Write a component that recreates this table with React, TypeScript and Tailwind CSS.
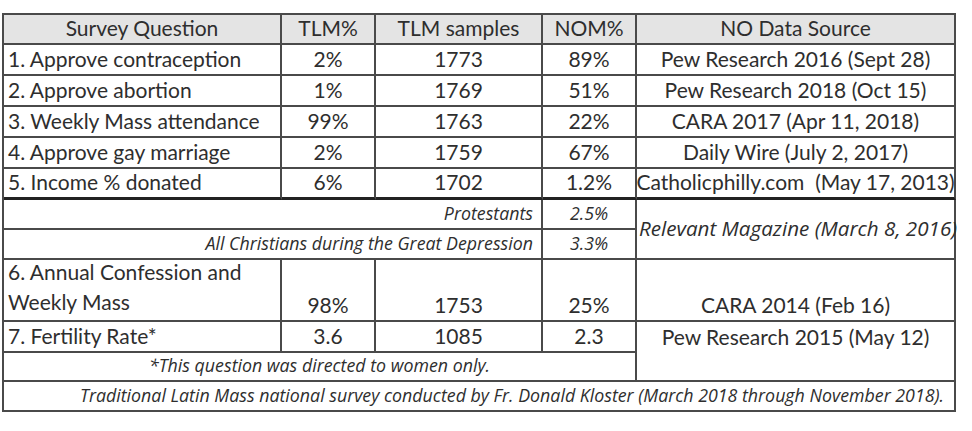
const FONT = "font-['Lato','Open_Sans',sans-serif]";
const ITAL = "italic font-['Open_Sans','Lato',sans-serif] text-[17.8px]";

type CellProps = {
  children?: React.ReactNode;
  className?: string;
};

function Cell({ children, className = "" }: CellProps) {
  return (
    <div className={`flex border-r-2 border-b-2 border-[#4a4a4a] px-[4px] pb-[3px] whitespace-nowrap ${className}`}>
      {children}
    </div>
  );
}

const ROWS = [
  { q: "1. Approve contraception", tlm: "2%", n: "1773", nom: "89%", src: "Pew Research 2016 (Sept 28)" },
  { q: "2. Approve abortion", tlm: "1%", n: "1769", nom: "51%", src: "Pew Research 2018 (Oct 15)" },
  { q: "3. Weekly Mass attendance", tlm: "99%", n: "1763", nom: "22%", src: "CARA 2017 (Apr 11, 2018)" },
  { q: "4. Approve gay marriage", tlm: "2%", n: "1759", nom: "67%", src: "Daily Wire (July 2, 2017)" },
  { q: "5. Income % donated", tlm: "6%", n: "1702", nom: "1.2%", src: "Catholicphilly.com\u00a0 (May 17, 2013)" },
];

export default function App() {
  return (
    <div className={`w-[972px] h-[431px] bg-white pl-[2px] pt-[13px] text-[21px] leading-[24px] text-[#2e2e2e] ${FONT}`}>
      <div className="grid w-[954px] grid-cols-[278px_94px_167px_94px_319px] grid-rows-[30px_31px_31px_31px_31px_31px_30px_30px_62px_31px_29px_30px] border-l-2 border-t-2 border-[#4a4a4a]">
        {["Survey Question", "TLM%", "TLM samples", "NOM%", "NO Data Source"].map((h) => (
          <Cell key={h} className="items-end justify-center bg-[#e4e4e4]">{h}</Cell>
        ))}

        {ROWS.map((r, i) => {
          const last = i === ROWS.length - 1 ? "border-b-[3px] border-b-[#222]" : "";
          return [
            <Cell key={r.q} className={`items-end ${last}`}>{r.q}</Cell>,
            <Cell key={r.q + "a"} className={`items-end justify-center ${last}`}>{r.tlm}</Cell>,
            <Cell key={r.q + "b"} className={`items-end justify-center ${last}`}>{r.n}</Cell>,
            <Cell key={r.q + "c"} className={`items-end justify-center ${last}`}>{r.nom}</Cell>,
            <Cell key={r.q + "d"} className={`items-end justify-center ${last}`}>{r.src}</Cell>,
          ];
        })}

        <Cell className={`col-span-3 items-end justify-end pr-[8px] ${ITAL}`}>Protestants</Cell>
        <Cell className={`items-end justify-center ${ITAL}`}>2.5%</Cell>
        <Cell className="row-span-2 items-center justify-start pl-[2px] pb-[2px] italic font-['Open_Sans','Lato',sans-serif] text-[20.6px] overflow-visible">
          Relevant Magazine (March 8, 2016)
        </Cell>
        <Cell className={`col-span-3 items-end justify-end pr-[8px] ${ITAL}`}>All Christians during the Great Depression</Cell>
        <Cell className={`items-end justify-center ${ITAL}`}>3.3%</Cell>

        <Cell className="flex-col justify-end leading-[30px] pb-0">
          <span>6. Annual Confession and</span>
          <span>Weekly Mass</span>
        </Cell>
        <Cell className="items-end justify-center">98%</Cell>
        <Cell className="items-end justify-center">1753</Cell>
        <Cell className="items-end justify-center">25%</Cell>
        <Cell className="items-end justify-center">CARA 2014 (Feb 16)</Cell>

        <Cell className="items-end">7. Fertility Rate*</Cell>
        <Cell className="items-end justify-center">3.6</Cell>
        <Cell className="items-end justify-center">1085</Cell>
        <Cell className="items-end justify-center">2.3</Cell>
        <Cell className="row-span-2 items-start justify-center pt-[3px]">Pew Research 2015 (May 12)</Cell>

        <Cell className={`col-span-4 items-end justify-center ${ITAL}`}>*This question was directed to women only.</Cell>

        <Cell className={`col-span-5 items-end justify-end pr-[10px] ${ITAL}`}>
          Traditional Latin Mass national survey conducted by Fr. Donald Kloster (March 2018 through November 2018).
        </Cell>
      </div>
    </div>
  );
}
